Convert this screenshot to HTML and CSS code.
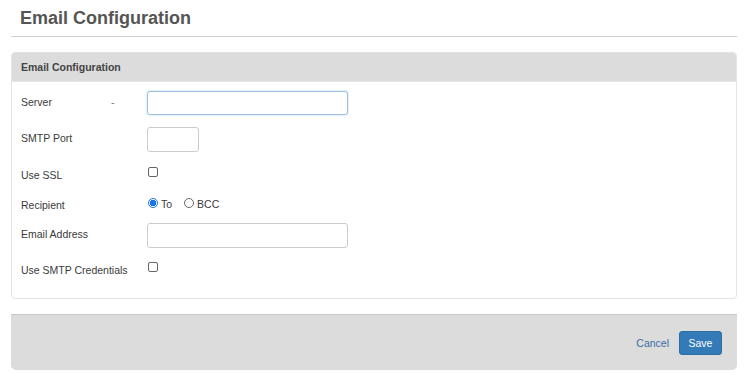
FILE: index.html
```html
<!DOCTYPE html>
<html>
<head>
<meta charset="utf-8">
<link rel="stylesheet" href="styles.css">
</head>
<body>
<div class="page-header">
  <h1 class="page-title">Email Configuration</h1>
</div>
<div class="panel">
  <div class="panel-heading">Email Configuration</div>
  <div class="panel-body">
    <div class="row row-input">
      <label class="lbl">Server<span class="dash">-</span></label>
      <input class="txt txt-wide txt-focus" type="text">
    </div>
    <div class="row row-input row-port">
      <label class="lbl">SMTP Port</label>
      <input class="txt txt-short" type="text">
    </div>
    <div class="row row-check row-ssl">
      <label class="lbl">Use SSL</label>
      <span class="box"></span>
    </div>
    <div class="row row-check row-recip">
      <label class="lbl">Recipient</label>
      <span class="radio radio-on"></span><span class="opt">To</span>
      <span class="radio"></span><span class="opt">BCC</span>
    </div>
    <div class="row row-input row-email">
      <label class="lbl">Email Address</label>
      <input class="txt txt-wide" type="text">
    </div>
    <div class="row row-check row-cred">
      <label class="lbl">Use SMTP Credentials</label>
      <span class="box"></span>
    </div>
  </div>
</div>
<div class="footer">
  <a class="cancel">Cancel</a>
  <button class="save">Save</button>
</div>
</body>
</html>
```

FILE: styles.css
```css
* { box-sizing: border-box; }
body {
  margin: 0;
  font-family: "Liberation Sans", Arial, sans-serif;
  color: #333;
  background: #fff;
  width: 749px;
  height: 379px;
  overflow: hidden;
}
.page-header {
  margin: 0 12px 0 11px;
  padding: 8px 0 0 9px;
  height: 37px;
  border-bottom: 1px solid #d0d0d0;
}
.page-title {
  margin: 0;
  font-size: 18px;
  font-weight: bold;
  color: #555;
  line-height: 20px;
}
.panel {
  margin: 15px 12px 0 11px;
  border: 1px solid #e3e3e3;
  border-radius: 4px;
  height: 247px;
  overflow: hidden;
}
.panel-heading {
  background: #dcdcdc;
  height: 29px;
  line-height: 29px;
  padding-left: 9px;
  font-size: 10.5px;
  font-weight: bold;
  color: #444;
  border-bottom: 1px solid #e6e6e6;
}
.panel-body {
  padding: 9px 0 0 9px;
}
.row {
  display: flex;
  align-items: center;
}
.lbl {
  width: 126px;
  flex: none;
  font-size: 10.5px;
  color: #3a3a3a;
  display: flex;
}
.row-input .lbl { padding-bottom: 3px; }
.row-check .lbl { padding-top: 4px; }
.dash {
  margin-left: 59px;
  color: #777;
}
.txt {
  height: 24px;
  border: 1px solid #ccc;
  border-radius: 3px;
  padding: 0;
  margin: 0;
  background: #fff;
  outline: none;
}
.txt-wide { width: 201px; }
.txt-short { width: 52px; height: 25px; }
.txt-focus {
  border-color: #9ec0e0;
  box-shadow: 0 0 2px rgba(102, 160, 220, 0.5);
}
.row-port { margin-top: 12px; }
.row-check { height: 22px; }
.row-ssl { margin-top: 10px; }
.row-recip { margin-top: 8px; }
.row-email { margin-top: 9px; height: 25px; }
.row-email .txt { height: 25px; }
.row-cred { margin-top: 9px; }
.box {
  width: 10px;
  height: 10px;
  border: 1px solid #666;
  border-radius: 2px;
  margin: 0 0 2px 1px;
  background: #fff;
}
.radio {
  width: 10px;
  height: 10px;
  border: 1px solid #666;
  border-radius: 50%;
  margin: 0 0 1px 1px;
  background: #fff;
}
.radio-on {
  border-color: #1a73e8;
  background: radial-gradient(circle, #1a73e8 0 3px, #fff 3.5px);
}
.opt {
  font-size: 10.5px;
  color: #3a3a3a;
  margin: 0 11px 0 3px;
  padding-top: 2px;
}
.footer {
  margin: 15px 12px 0 11px;
  height: 56px;
  background: #dcdcdc;
  border-top: 1px solid #c8c8c8;
  border-radius: 0 0 5px 5px;
  display: flex;
  align-items: center;
  justify-content: flex-end;
  padding-right: 15px;
}
.cancel {
  font-size: 10.5px;
  color: #3a6ea5;
  margin-right: 10px;
}
.save {
  width: 43px;
  height: 24px;
  background: #337ab7;
  border: 1px solid #2e6da4;
  border-radius: 3px;
  color: #fff;
  font-family: "Liberation Sans", Arial, sans-serif;
  font-size: 10.5px;
  padding: 0;
}
```
